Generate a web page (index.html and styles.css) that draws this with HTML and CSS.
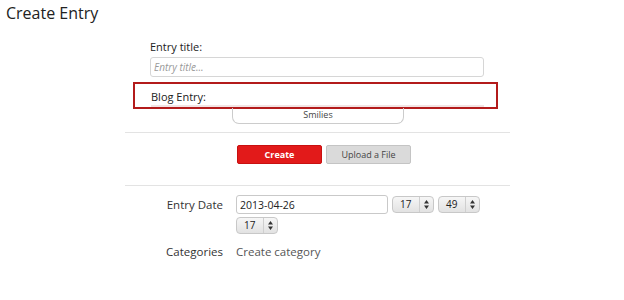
FILE: index.html
```html
<!DOCTYPE html>
<html lang="en">
<head>
    <meta charset="UTF-8">
    <title>Create Entry</title>
    <link rel="stylesheet" href="styles.css">
</head>
<body>
    <h1 class="page-title">Create Entry</h1>

    <form class="entry-form">
        <div class="field">
            <label class="field-label">Entry title:</label>
            <input class="text-input" type="text" placeholder="Entry title...">
        </div>

        <div class="editor-box">
            <label class="field-label">Blog Entry:</label>
            <div class="editor-line"></div>
        </div>
        <div class="smilies-tab">Smilies</div>

        <div class="divider divider-top"></div>

        <div class="actions">
            <button type="button" class="btn btn-create">Create</button>
            <button type="button" class="btn btn-upload">Upload a File</button>
        </div>

        <div class="divider"></div>

        <div class="row">
            <div class="row-label">Entry Date</div>
            <div class="row-value date-fields">
                <input class="date-input" type="text" value="2013-04-26">
                <div class="spin-select">
                    <span class="spin-text">17</span>
                    <svg class="spin-arrows" width="13" height="15" viewBox="0 0 13 15">
                        <path d="M4 6.5 L6.5 3 L9 6.5 Z M4 8.5 L6.5 12 L9 8.5 Z" fill="#333"/>
                    </svg>
                </div>
                <div class="spin-select">
                    <span class="spin-text">49</span>
                    <svg class="spin-arrows" width="13" height="15" viewBox="0 0 13 15">
                        <path d="M4 6.5 L6.5 3 L9 6.5 Z M4 8.5 L6.5 12 L9 8.5 Z" fill="#333"/>
                    </svg>
                </div>
                <div class="spin-select">
                    <span class="spin-text">17</span>
                    <svg class="spin-arrows" width="13" height="15" viewBox="0 0 13 15">
                        <path d="M4 6.5 L6.5 3 L9 6.5 Z M4 8.5 L6.5 12 L9 8.5 Z" fill="#333"/>
                    </svg>
                </div>
            </div>
        </div>

        <div class="row row-categories">
            <div class="row-label">Categories</div>
            <div class="row-value">Create category</div>
        </div>
    </form>
</body>
</html>
```

FILE: styles.css
```css
body {
    margin: 0;
    padding: 0;
    background-color: #fff;
    font-family: 'Open Sans', 'DejaVu Sans', sans-serif;
    color: #333;
}

.page-title {
    margin: 0;
    padding: 3px 0 0 6px;
    font-size: 16px;
    font-weight: normal;
    line-height: 20px;
    color: #222;
}

.entry-form {
    width: 385px;
    margin: 16px 0 0 125px;
}

.field {
    padding: 0 26px 0 25px;
}

.field-label {
    display: block;
    font-size: 11px;
    line-height: 15px;
    color: #222;
}

.text-input {
    box-sizing: border-box;
    width: 100%;
    height: 20px;
    margin-top: 1px;
    padding: 0 3px;
    border: 1px solid #d6d6d6;
    border-radius: 3px;
    font-family: inherit;
    font-size: 10px;
    color: #333;
}

.text-input::placeholder {
    color: #999;
    font-style: italic;
}

.editor-box {
    box-sizing: border-box;
    width: 365px;
    height: 27px;
    margin: 5px 0 0 8px;
    padding: 5px 12px 0 16px;
    border: 2px solid #b31b1b;
}

.editor-line {
    height: 2px;
    margin-top: 1px;
    background-color: #f2e4e4;
}

.smilies-tab {
    box-sizing: border-box;
    width: 172px;
    height: 16px;
    margin: -1px 0 0 107px;
    border: 1px solid #ccc;
    border-top: none;
    border-radius: 0 0 7px 7px;
    text-align: center;
    font-size: 9px;
    line-height: 14px;
    color: #444;
}

.divider {
    height: 1px;
    background-color: #e3e3e3;
}

.divider-top {
    margin-top: 8px;
}

.actions {
    display: flex;
    gap: 4px;
    padding: 12px 0 21px 112px;
}

.btn {
    box-sizing: border-box;
    height: 19px;
    padding: 0;
    border-radius: 2px;
    font-family: inherit;
    font-size: 9px;
}

.btn-create {
    width: 85px;
    background-color: #e21a1a;
    border: 1px solid #c81010;
    color: #fff;
    font-weight: bold;
}

.btn-upload {
    width: 85px;
    background-color: #dadada;
    border: 1px solid #c4c4c4;
    color: #444;
}

.row {
    display: flex;
    margin-top: 9px;
    font-size: 11.5px;
}

.row-label {
    width: 98px;
    text-align: right;
    line-height: 19px;
    color: #333;
}

.row-value {
    margin-left: 13px;
    line-height: 19px;
    color: #555;
}

.date-fields {
    display: flex;
    flex-wrap: wrap;
    gap: 2px 4px;
    width: 250px;
}

.date-input {
    box-sizing: border-box;
    width: 152px;
    height: 19px;
    padding: 0 3px;
    border: 1px solid #c9c9c9;
    border-radius: 3px;
    font-family: inherit;
    font-size: 10.5px;
    color: #222;
}

.spin-select {
    box-sizing: border-box;
    display: flex;
    align-items: center;
    width: 42px;
    height: 17px;
    margin-top: 1px;
    border: 1px solid #c8c8c8;
    border-radius: 4px;
    background: linear-gradient(#f6f6f6, #e2e2e2);
    font-size: 10px;
    color: #222;
}

.spin-text {
    flex: 1;
    padding-left: 7px;
    line-height: 15px;
}

.spin-arrows {
    display: block;
    border-left: 1px solid #cfcfcf;
}

.row-categories {
    margin-top: 8px;
}
```
